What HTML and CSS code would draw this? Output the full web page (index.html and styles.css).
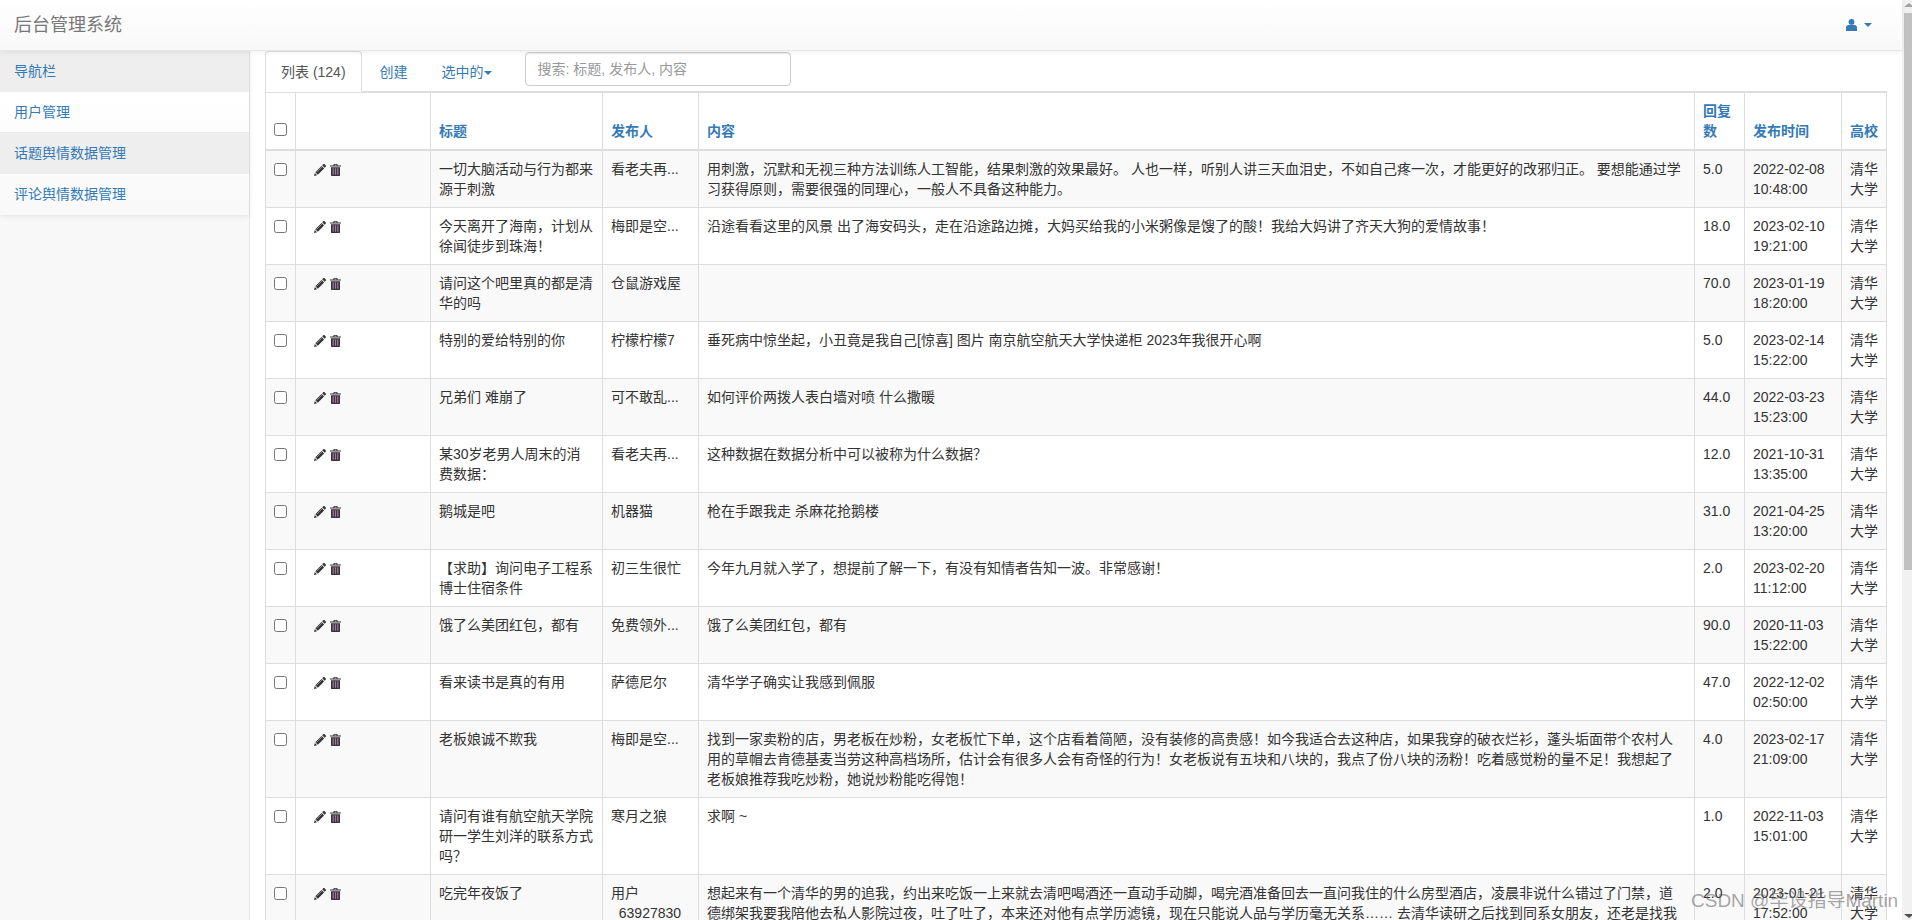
FILE: index.html
```html
<!DOCTYPE html>
<html lang="zh-CN">
<head>
<meta charset="utf-8">
<title>后台管理系统</title>
<link rel="stylesheet" href="styles.css">
</head>
<body>
<svg class="defs" width="0" height="0" aria-hidden="true">
  <symbol id="i-pencil" viewBox="0 0 12 12">
    <path d="M9.2 0.3c.4-.4 1-.4 1.4 0l1.1 1.1c.4.4.4 1 0 1.4l-1 1L8.2 1.3z"/>
    <path d="M7.6 1.9l2.5 2.5-6.3 6.3-2.5-2.5z"/>
    <path d="M.8 8.9l2.3 2.3L0 12z"/>
    <path class="pencil-line" d="M2.6 8.4l5.6-5.6"/>
  </symbol>
  <symbol id="i-trash" viewBox="0 0 11 12">
    <path d="M3.8 0h3.4l.6 1.4H11v1.2H0V1.4h3.2zM4.6.8l-.2.6h2.2L6.4.8z"/>
    <path d="M1 3.2h9V11c0 .6-.4 1-1 1H2c-.6 0-1-.4-1-1z"/>
    <path class="stripe" d="M2.6 4.2h1.2v6.6H2.6zM4.9 4.2h1.2v6.6H4.9zM7.2 4.2h1.2v6.6H7.2z"/>
  </symbol>
</svg>
<div class="page">
  <div class="content">
    <nav class="navbar">
      <a class="brand" href="#">后台管理系统</a>
      <a class="user" href="#">
        <svg class="user-icon" viewBox="0 0 11 12" aria-hidden="true"><circle cx="5.5" cy="2.9" r="2.9"/><path d="M0 12V8.6C0 7.2 1 6 2.6 6h5.8C10 6 11 7.2 11 8.6V12z"/></svg>
        <span class="caret caret-user"></span>
      </a>
    </nav>
    <div class="layout">
      <aside class="sidebar">
        <ul class="menu">
          <li class="menu-item menu-grey"><a href="#">导航栏</a></li>
          <li class="menu-item menu-white"><a href="#">用户管理</a></li>
          <li class="menu-item menu-grey"><a href="#">话题舆情数据管理</a></li>
          <li class="menu-item menu-light"><a href="#">评论舆情数据管理</a></li>
        </ul>
      </aside>
      <main class="main">
        <div class="tabs">
          <a class="tab tab-active" href="#">列表 (124)</a>
          <a class="tab" href="#">创建</a>
          <a class="tab" href="#">选中的<span class="caret caret-tab"></span></a>
          <form class="search"><input class="search-input" type="text" placeholder="搜索: 标题, 发布人, 内容"></form>
        </div>
        <table class="grid">
          <colgroup>
            <col class="c-check"><col class="c-act"><col class="c-title"><col class="c-author"><col class="c-body"><col class="c-reply"><col class="c-time"><col class="c-school">
          </colgroup>
          <thead>
            <tr><th><input class="check" type="checkbox"></th><th></th><th><a href="#">标题</a></th><th><a href="#">发布人</a></th><th><a href="#">内容</a></th><th><a href="#">回复数</a></th><th><a href="#">发布时间</a></th><th><a href="#">高校</a></th></tr>
          </thead>
          <tbody>
            <tr><td><input class="check" type="checkbox"></td><td class="acts"><svg class="ic-p"><use href="#i-pencil"/></svg><svg class="ic-t"><use href="#i-trash"/></svg></td><td>一切大脑活动与行为都来源于刺激</td><td>看老夫再...</td><td class="body-cell">用刺激，沉默和无视三种方法训练人工智能，结果刺激的效果最好。 人也一样，听别人讲三天血泪史，不如自己疼一次，才能更好的改邪归正。 要想能通过学习获得原则，需要很强的同理心，一般人不具备这种能力。</td><td>5.0</td><td>2022-02-08 10:48:00</td><td>清华大学</td></tr>
            <tr><td><input class="check" type="checkbox"></td><td class="acts"><svg class="ic-p"><use href="#i-pencil"/></svg><svg class="ic-t"><use href="#i-trash"/></svg></td><td>今天离开了海南，计划从徐闻徒步到珠海！</td><td>梅即是空...</td><td class="body-cell">沿途看看这里的风景 出了海安码头，走在沿途路边摊，大妈买给我的小米粥像是馊了的酸！我给大妈讲了齐天大狗的爱情故事！</td><td>18.0</td><td>2023-02-10 19:21:00</td><td>清华大学</td></tr>
            <tr><td><input class="check" type="checkbox"></td><td class="acts"><svg class="ic-p"><use href="#i-pencil"/></svg><svg class="ic-t"><use href="#i-trash"/></svg></td><td>请问这个吧里真的都是清华的吗</td><td>仓鼠游戏屋</td><td class="body-cell"></td><td>70.0</td><td>2023-01-19 18:20:00</td><td>清华大学</td></tr>
            <tr><td><input class="check" type="checkbox"></td><td class="acts"><svg class="ic-p"><use href="#i-pencil"/></svg><svg class="ic-t"><use href="#i-trash"/></svg></td><td>特别的爱给特别的你</td><td>柠檬柠檬7</td><td class="body-cell">垂死病中惊坐起，小丑竟是我自己[惊喜] 图片 南京航空航天大学快递柜 2023年我很开心啊</td><td>5.0</td><td>2023-02-14 15:22:00</td><td>清华大学</td></tr>
            <tr><td><input class="check" type="checkbox"></td><td class="acts"><svg class="ic-p"><use href="#i-pencil"/></svg><svg class="ic-t"><use href="#i-trash"/></svg></td><td>兄弟们 难崩了</td><td>可不敢乱...</td><td class="body-cell">如何评价两拨人表白墙对喷 什么撒暖</td><td>44.0</td><td>2022-03-23 15:23:00</td><td>清华大学</td></tr>
            <tr><td><input class="check" type="checkbox"></td><td class="acts"><svg class="ic-p"><use href="#i-pencil"/></svg><svg class="ic-t"><use href="#i-trash"/></svg></td><td>某30岁老男人周末的消费数据：</td><td>看老夫再...</td><td class="body-cell">这种数据在数据分析中可以被称为什么数据？</td><td>12.0</td><td>2021-10-31 13:35:00</td><td>清华大学</td></tr>
            <tr><td><input class="check" type="checkbox"></td><td class="acts"><svg class="ic-p"><use href="#i-pencil"/></svg><svg class="ic-t"><use href="#i-trash"/></svg></td><td>鹅城是吧</td><td>机器猫</td><td class="body-cell">枪在手跟我走 杀麻花抢鹅楼</td><td>31.0</td><td>2021-04-25 13:20:00</td><td>清华大学</td></tr>
            <tr><td><input class="check" type="checkbox"></td><td class="acts"><svg class="ic-p"><use href="#i-pencil"/></svg><svg class="ic-t"><use href="#i-trash"/></svg></td><td>【求助】询问电子工程系博士住宿条件</td><td>初三生很忙</td><td class="body-cell">今年九月就入学了，想提前了解一下，有没有知情者告知一波。非常感谢！</td><td>2.0</td><td>2023-02-20 11:12:00</td><td>清华大学</td></tr>
            <tr><td><input class="check" type="checkbox"></td><td class="acts"><svg class="ic-p"><use href="#i-pencil"/></svg><svg class="ic-t"><use href="#i-trash"/></svg></td><td>饿了么美团红包，都有</td><td>免费领外...</td><td class="body-cell">饿了么美团红包，都有</td><td>90.0</td><td>2020-11-03 15:22:00</td><td>清华大学</td></tr>
            <tr><td><input class="check" type="checkbox"></td><td class="acts"><svg class="ic-p"><use href="#i-pencil"/></svg><svg class="ic-t"><use href="#i-trash"/></svg></td><td>看来读书是真的有用</td><td>萨德尼尔</td><td class="body-cell">清华学子确实让我感到佩服</td><td>47.0</td><td>2022-12-02 02:50:00</td><td>清华大学</td></tr>
            <tr><td><input class="check" type="checkbox"></td><td class="acts"><svg class="ic-p"><use href="#i-pencil"/></svg><svg class="ic-t"><use href="#i-trash"/></svg></td><td>老板娘诚不欺我</td><td>梅即是空...</td><td class="body-cell">找到一家卖粉的店，男老板在炒粉，女老板忙下单，这个店看着简陋，没有装修的高贵感！如今我适合去这种店，如果我穿的破衣烂衫，蓬头垢面带个农村人用的草帽去肯德基麦当劳这种高档场所，估计会有很多人会有奇怪的行为！女老板说有五块和八块的，我点了份八块的汤粉！吃着感觉粉的量不足！我想起了老板娘推荐我吃炒粉，她说炒粉能吃得饱！</td><td>4.0</td><td>2023-02-17 21:09:00</td><td>清华大学</td></tr>
            <tr><td><input class="check" type="checkbox"></td><td class="acts"><svg class="ic-p"><use href="#i-pencil"/></svg><svg class="ic-t"><use href="#i-trash"/></svg></td><td>请问有谁有航空航天学院研一学生刘洋的联系方式吗？</td><td>寒月之狼</td><td class="body-cell">求啊 ~</td><td>1.0</td><td>2022-11-03 15:01:00</td><td>清华大学</td></tr>
            <tr><td><input class="check" type="checkbox"></td><td class="acts"><svg class="ic-p"><use href="#i-pencil"/></svg><svg class="ic-t"><use href="#i-trash"/></svg></td><td>吃完年夜饭了</td><td>用户<br>&nbsp;&nbsp;63927830</td><td class="body-cell">想起来有一个清华的男的追我，约出来吃饭一上来就去清吧喝酒还一直动手动脚，喝完酒准备回去一直问我住的什么房型酒店，凌晨非说什么错过了门禁，道德绑架我要我陪他去私人影院过夜，吐了吐了，本来还对他有点学历滤镜，现在只能说人品与学历毫无关系…… 去清华读研之后找到同系女朋友，还老是找我</td><td>2.0</td><td>2023-01-21 17:52:00</td><td>清华大学</td></tr>
          </tbody>
        </table>
      </main>
    </div>
  </div>
  <div class="scrollbar" aria-hidden="true">
    <span class="sb-up"></span>
    <span class="sb-thumb"></span>
    <span class="sb-down"></span>
  </div>
</div>
<div class="watermark">CSDN @毕设指导Martin</div>
</body>
</html>
```
FILE: styles.css
```css
* { box-sizing: border-box; }
html, body { margin: 0; height: 100%; overflow: hidden; }
body {
  font-family: "Liberation Sans", "Noto Sans CJK SC", sans-serif;
  font-size: 14px;
  line-height: 20px;
  color: #333;
  background: #fff;
}
a { color: #337ab7; text-decoration: none; }
.defs { position: absolute; }

.page { display: flex; height: 920px; overflow: hidden; }
.content { flex: 1; min-width: 0; display: flex; flex-direction: column; }

.navbar {
  flex: none;
  height: 51px;
  padding: 0 30px 0 14px;
  display: flex;
  align-items: center;
  justify-content: space-between;
  background: linear-gradient(to bottom, #fff 0, #f8f8f8 100%);
  border-bottom: 1px solid #e7e7e7;
  box-shadow: 0 1px 5px rgba(0, 0, 0, .075);
  position: relative;
  z-index: 2;
}
.brand { font-size: 18px; color: #777; }
.user { display: flex; align-items: center; gap: 7px; }
.user-icon { width: 11px; height: 12px; fill: #337ab7; }
.caret {
  display: inline-block;
  width: 0;
  height: 0;
  border-top: 4px solid #337ab7;
  border-left: 4px solid transparent;
  border-right: 4px solid transparent;
}
.caret-tab { vertical-align: middle; }

.layout { flex: 1; min-height: 0; display: flex; }
.sidebar {
  flex: none;
  width: 250px;
  background: #f8f8f8;
  border-right: 1px solid #e7e7e7;
}
.menu {
  list-style: none;
  margin: 0;
  padding: 0;
  box-shadow: 0 1px 5px rgba(0, 0, 0, .1);
}
.menu-item { height: 41px; padding: 10px 14px; }
.menu-grey { background: #eee; }
.menu-white { background: linear-gradient(to bottom, #fff, #fdfdfd); border-bottom: 1px solid #eaeaea; }
.menu-light { background: linear-gradient(to bottom, #fbfbfb, #f8f8f8); }

.main { flex: 1; min-width: 0; padding: 0 15px; }
.tabs {
  display: flex;
  align-items: flex-start;
  height: 41px;
  border-bottom: 1px solid #ddd;
}
.tab {
  height: 41px;
  padding: 10px 15px;
  margin-right: 2px;
  border: 1px solid transparent;
  border-radius: 4px 4px 0 0;
  white-space: nowrap;
}
.tab-active {
  color: #555;
  background: #fff;
  border-color: #ddd #ddd transparent;
}
.search { margin: 1px 0 0 15px; }
.search-input {
  display: block;
  width: 266px;
  height: 34px;
  padding: 6px 12px;
  font: inherit;
  color: #555;
  background: #fff;
  border: 1px solid #ccc;
  border-radius: 4px;
  box-shadow: inset 0 1px 1px rgba(0, 0, 0, .075);
}
.search-input::placeholder { color: #999; opacity: 1; }

.grid { width: 100%; table-layout: fixed; border-collapse: collapse; background: #fff; }
.c-check { width: 30px; }
.c-act { width: 135px; }
.c-title { width: 172px; }
.c-author { width: 96px; }
.c-reply { width: 50px; }
.c-time { width: 97px; }
.c-school { width: 45px; }
.grid th, .grid td {
  padding: 8px;
  border: 1px solid #ddd;
  text-align: left;
  vertical-align: top;
}
.grid th { vertical-align: bottom; border-bottom-width: 2px; }
.grid td.body-cell { padding-right: 9px; }
.grid tbody tr:nth-child(odd) { background: #f9f9f9; }
.check { display: inline-block; margin: 4px 0 0; width: 13px; height: 13px; }
.acts { padding-left: 18px !important; white-space: nowrap; }
.ic-p, .ic-t { display: inline-block; vertical-align: top; margin-top: 5px; fill: #333; }
.ic-p { width: 12px; height: 12px; margin-right: 4px; }
.ic-t { width: 11px; height: 12px; }
.stripe { fill: #a878a4; }
.pencil-line { fill: none; stroke: #8c8c8c; stroke-width: .9; }

.scrollbar {
  flex: none;
  width: 10px;
  height: 920px;
  background: #f1f1f1;
  display: flex;
  flex-direction: column;
  align-items: flex-end;
  overflow: hidden;
}
.sb-up, .sb-down {
  flex: none;
  width: 0;
  height: 0;
  border-left: 5px solid transparent;
  border-right: 5px solid transparent;
  margin-right: -2px;
}
.sb-up { margin-top: 3px; border-bottom: 4px solid #a3a3a3; }
.sb-thumb { flex: none; width: 8px; height: 557px; margin-top: 6px; background: #c1c1c1; }
.sb-down { margin-top: auto; margin-bottom: 2px; border-top: 4px solid #505050; }

.watermark {
  position: absolute;
  left: 1691px;
  top: 888px;
  font-size: 19px;
  line-height: 26px;
  color: rgba(90, 90, 90, .55);
  white-space: nowrap;
}
```
